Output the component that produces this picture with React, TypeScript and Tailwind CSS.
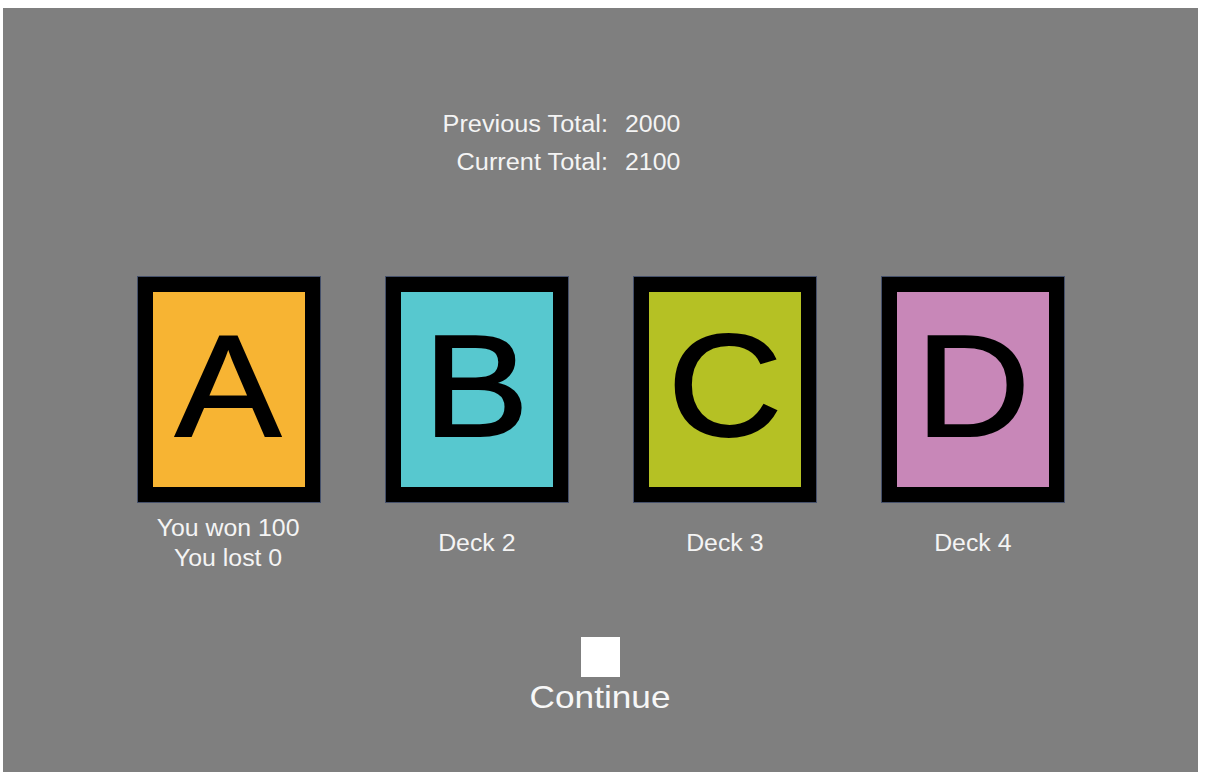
import React from "react";

const decks = [
  { letter: "A", color: "bg-[#f7b433]", label: ["You won 100", "You lost 0"] },
  { letter: "B", color: "bg-[#57c8cf]", label: ["Deck 2"] },
  { letter: "C", color: "bg-[#b5c124]", label: ["Deck 3"] },
  { letter: "D", color: "bg-[#c887b8]", label: ["Deck 4"] },
];

function DeckCard({ letter, color, label }: { letter: string; color: string; label: string[] }) {
  return (
    <div className="flex w-[182px] flex-col items-center">
      <div className="h-[225px] w-[182px] border-[15px] border-black shadow-[0_0_0_1px_#45506a]">
        <div className={`flex h-full w-full items-center justify-center ${color}`}>
          <span className="-mt-[6px] inline-block scale-x-[1.1] text-[144px] leading-none text-black [-webkit-text-stroke:2px_black]">
            {letter}
          </span>
        </div>
      </div>
      <div className="mt-[11px] flex h-[60px] flex-col items-center justify-center">
        {label.map((line) => (
          <span
            key={line}
            className="inline-block scale-x-[1.08] whitespace-nowrap text-[23px] leading-[30px] text-[#f4f4f4]"
          >
            {line}
          </span>
        ))}
      </div>
    </div>
  );
}

export default function App() {
  return (
    <div
      className="h-[779px] w-[1214px] bg-white pt-[8px]"
      style={{ fontFamily: '"Liberation Sans", Arial, sans-serif' }}
    >
      <div className="ml-[3px] flex h-[764px] w-[1195px] flex-col bg-[#7f7f7f] pt-[97px]">
        <div className="grid grid-cols-[605px_1fr] gap-x-[17px] text-[23px] leading-[38px] text-[#f4f4f4]">
          <span className="origin-right scale-x-[1.1] text-right">Previous Total:</span>
          <span className="inline-block origin-left scale-x-[1.08]">2000</span>
          <span className="origin-right scale-x-[1.1] text-right">Current Total:</span>
          <span className="inline-block origin-left scale-x-[1.08]">2100</span>
        </div>

        <div className="mt-[96px] flex justify-center gap-[66px]">
          {decks.map((d) => (
            <DeckCard key={d.letter} {...d} />
          ))}
        </div>

        <div className="mt-[64px] flex flex-col items-center">
          <button className="h-[40px] w-[39px] bg-white" aria-label="Continue" />
          <span className="inline-block scale-x-[1.1] text-[32px] leading-[40px] text-[#f7f7f7]">
            Continue
          </span>
        </div>
      </div>
    </div>
  );
}
